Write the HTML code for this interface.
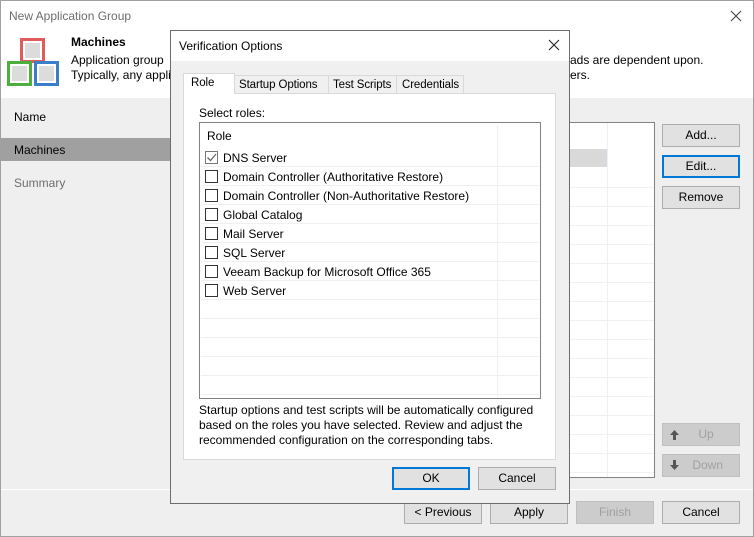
<!DOCTYPE html>
<html><head><meta charset="utf-8"><style>
*{box-sizing:border-box;margin:0;padding:0}
body{width:754px;height:537px;overflow:hidden;font-family:"Liberation Sans",sans-serif;font-size:12px;color:#000;background:#efefef;position:relative}
.a{position:absolute}
.win{left:0;top:0;width:754px;height:537px;border:1px solid #a0a0a0;background:#efefef}
.btn{position:absolute;height:23px;border:1px solid #adadad;background:#e1e1e1;text-align:center;line-height:21px}
.dis{color:#a0a0a0;background:#cccccc;border-color:#bfbfbf}
.blue{border:2px solid #0078d7;line-height:19px}
.hl{position:absolute;height:1px;background:#f0f0f0}
.cb{position:absolute;width:13px;height:13px;border:1px solid #333;background:#fff}
.t{position:absolute;white-space:nowrap}
.tab{font-size:11.5px;letter-spacing:-0.1px}
</style></head><body>
<div class="a win"></div>
<div class="a" style="left:1px;top:1px;width:752px;height:97px;background:#fff"></div>
<div class="t" style="left:9px;top:9px;color:#6d6d6d">New Application Group</div>
<svg class="a" style="left:730px;top:10px" width="12" height="12"><path d="M1 1L11 11M11 1L1 11" stroke="#444" stroke-width="1.1"/></svg>
<!-- logo -->
<div class="a" style="left:20px;top:38px;width:25px;height:25px;border:3px solid #e05b5b;background:#fff;padding:2px"><div style="width:100%;height:100%;background:#dcdcdc"></div></div>
<div class="a" style="left:7px;top:61px;width:25px;height:25px;border:3px solid #4caf3e;background:#fff;padding:2px"><div style="width:100%;height:100%;background:#dcdcdc"></div></div>
<div class="a" style="left:34px;top:61px;width:25px;height:25px;border:3px solid #3b7fc9;background:#fff;padding:2px"><div style="width:100%;height:100%;background:#dcdcdc"></div></div>
<div class="t" style="left:71px;top:35px;font-weight:bold">Machines</div>
<div class="t" style="left:71px;top:53px">Application group</div>
<div class="t" style="left:71px;top:68px">Typically, any appli</div>
<div class="t" style="left:570px;top:53px">ads are dependent upon.</div>
<div class="t" style="left:570px;top:68px">ers.</div>
<!-- nav -->
<div class="t" style="left:14px;top:110px">Name</div>
<div class="a" style="left:1px;top:138px;width:170px;height:23px;background:#a0a0a0"></div>
<div class="t" style="left:14px;top:143px">Machines</div>
<div class="t" style="left:14px;top:176px;color:#6d6d6d">Summary</div>
<!-- main list -->
<div class="a" style="left:540px;top:122px;width:115px;height:356px;background:#fff;border:1px solid #828282"></div>
<div class="a" style="left:541px;top:149px;width:66px;height:18px;background:#d9d9d9"></div>
<div class="a" style="left:607px;top:123px;width:1px;height:354px;background:#eaf0f8"></div>
<div class="hl" style="left:541px;top:187px;width:113px"></div>
<div class="hl" style="left:541px;top:206px;width:113px"></div>
<div class="hl" style="left:541px;top:225px;width:113px"></div>
<div class="hl" style="left:541px;top:244px;width:113px"></div>
<div class="hl" style="left:541px;top:263px;width:113px"></div>
<div class="hl" style="left:541px;top:282px;width:113px"></div>
<div class="hl" style="left:541px;top:301px;width:113px"></div>
<div class="hl" style="left:541px;top:320px;width:113px"></div>
<div class="hl" style="left:541px;top:339px;width:113px"></div>
<div class="hl" style="left:541px;top:358px;width:113px"></div>
<div class="hl" style="left:541px;top:377px;width:113px"></div>
<div class="hl" style="left:541px;top:396px;width:113px"></div>
<div class="hl" style="left:541px;top:415px;width:113px"></div>
<div class="hl" style="left:541px;top:434px;width:113px"></div>
<div class="hl" style="left:541px;top:453px;width:113px"></div>
<div class="hl" style="left:541px;top:472px;width:113px"></div>
<div class="btn" style="left:662px;top:124px;width:78px">Add...</div>
<div class="btn blue" style="left:662px;top:155px;width:78px">Edit...</div>
<div class="btn" style="left:662px;top:186px;width:78px">Remove</div>
<div class="btn dis" style="left:662px;top:423px;width:78px"><svg class="a" style="left:7px;top:6px" width="9" height="10"><path d="M4.5 0L9 5H6V10H3V5H0Z" fill="#555"/></svg>&nbsp;&nbsp;&nbsp;Up</div>
<div class="btn dis" style="left:662px;top:454px;width:78px"><svg class="a" style="left:7px;top:5px" width="9" height="10"><path d="M4.5 10L9 5H6V0H3V5H0Z" fill="#555"/></svg>&nbsp;&nbsp;&nbsp;&nbsp;Down</div>
<div class="a" style="left:1px;top:489px;width:752px;height:1px;background:#fff"></div>
<div class="btn" style="left:404px;top:501px;width:78px">&lt; Previous</div>
<div class="btn" style="left:490px;top:501px;width:78px">Apply</div>
<div class="btn dis" style="left:576px;top:501px;width:78px">Finish</div>
<div class="btn" style="left:662px;top:501px;width:78px">Cancel</div>
<!-- dialog -->
<div class="a" style="left:170px;top:30px;width:400px;height:474px;background:#f0f0f0;border:1px solid #6d6d6d"></div>
<div class="a" style="left:171px;top:31px;width:398px;height:30px;background:#fff"></div>
<div class="t" style="left:179px;top:39px">Verification Options</div>
<svg class="a" style="left:548px;top:39px" width="12" height="12"><path d="M1 1L11 11M11 1L1 11" stroke="#222" stroke-width="1.1"/></svg>
<div class="a" style="left:183px;top:93px;width:373px;height:367px;background:#fff;border:1px solid #d9d9d9"></div>
<div class="a" style="left:234px;top:75px;width:95px;height:19px;background:#f0f0f0;border:1px solid #d9d9d9"></div>
<div class="a" style="left:328px;top:75px;width:69px;height:19px;background:#f0f0f0;border:1px solid #d9d9d9"></div>
<div class="a" style="left:396px;top:75px;width:68px;height:19px;background:#f0f0f0;border:1px solid #d9d9d9"></div>
<div class="a" style="left:183px;top:73px;width:52px;height:21px;background:#fff;border:1px solid #d9d9d9;border-bottom:none"></div>
<div class="t tab" style="left:191px;top:77px">Role</div>
<div class="t tab" style="left:239px;top:79px">Startup Options</div>
<div class="t tab" style="left:333px;top:79px">Test Scripts</div>
<div class="t tab" style="left:402px;top:79px">Credentials</div>
<div class="t" style="left:199px;top:106px">Select roles:</div>
<div class="a" style="left:199px;top:122px;width:342px;height:277px;background:#fff;border:1px solid #828282"></div>
<div class="a" style="left:497px;top:125px;width:1px;height:272px;background:#eaf0f8"></div>
<div class="t" style="left:207px;top:129px">Role</div>
<div class="hl" style="left:201px;top:166px;width:338px"></div>
<div class="hl" style="left:201px;top:185px;width:338px"></div>
<div class="hl" style="left:201px;top:204px;width:338px"></div>
<div class="hl" style="left:201px;top:223px;width:338px"></div>
<div class="hl" style="left:201px;top:242px;width:338px"></div>
<div class="hl" style="left:201px;top:261px;width:338px"></div>
<div class="hl" style="left:201px;top:280px;width:338px"></div>
<div class="hl" style="left:201px;top:299px;width:338px"></div>
<div class="hl" style="left:201px;top:318px;width:338px"></div>
<div class="hl" style="left:201px;top:337px;width:338px"></div>
<div class="hl" style="left:201px;top:356px;width:338px"></div>
<div class="hl" style="left:201px;top:375px;width:338px"></div>
<div class="hl" style="left:201px;top:394px;width:338px"></div>
<div class="cb" style="left:205px;top:151px;border-color:#777"><svg width="11" height="11" style="position:absolute;left:0;top:0"><path d="M1.5 5.5 L4.5 8.5 L10 2" stroke="#666" stroke-width="1.3" fill="none"/></svg></div>
<div class="t" style="left:223px;top:151px">DNS Server</div>
<div class="cb" style="left:205px;top:170px"></div><div class="t" style="left:223px;top:170px">Domain Controller (Authoritative Restore)</div>
<div class="cb" style="left:205px;top:189px"></div><div class="t" style="left:223px;top:189px">Domain Controller (Non-Authoritative Restore)</div>
<div class="cb" style="left:205px;top:208px"></div><div class="t" style="left:223px;top:208px">Global Catalog</div>
<div class="cb" style="left:205px;top:227px"></div><div class="t" style="left:223px;top:227px">Mail Server</div>
<div class="cb" style="left:205px;top:246px"></div><div class="t" style="left:223px;top:246px">SQL Server</div>
<div class="cb" style="left:205px;top:265px"></div><div class="t" style="left:223px;top:265px">Veeam Backup for Microsoft Office 365</div>
<div class="cb" style="left:205px;top:284px"></div><div class="t" style="left:223px;top:284px">Web Server</div>
<div class="t" style="left:199px;top:403px;line-height:15px">Startup options and test scripts will be automatically configured<br>based on the roles you have selected. Review and adjust the<br>recommended configuration on the corresponding tabs.</div>
<div class="btn blue" style="left:392px;top:467px;width:78px">OK</div>
<div class="btn" style="left:478px;top:467px;width:78px">Cancel</div>
</body></html>
